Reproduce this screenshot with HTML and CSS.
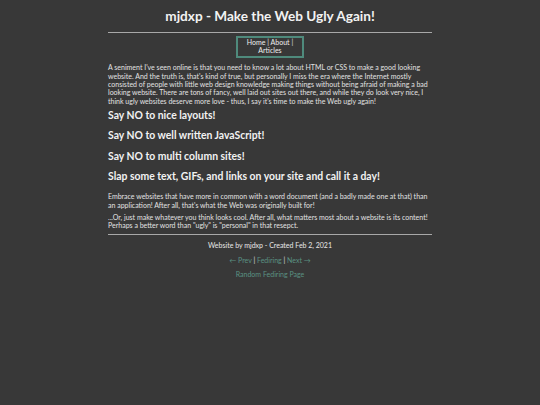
FILE: index.html
```html
<!DOCTYPE html>
<html>
<head>
<meta charset="utf-8">
<title>mjdxp - Make the Web Ugly Again!</title>
<link rel="stylesheet" href="styles.css">
</head>
<body>
<div class="page">
  <h1 class="title">mjdxp - Make the Web Ugly Again!</h1>
  <hr class="rule">
  <div class="nav-wrap">
    <div class="nav"><a href="#">Home</a> | <a href="#">About</a> | <a href="#">Articles</a></div>
  </div>
  <p class="text intro">A seniment I've seen online is that you need to know a lot about HTML or CSS to make a good looking website. And the truth is, that's kind of true, but personally I miss the era where the Internet mostly consisted of people with little web design knowledge making things without being afraid of making a bad looking website. There are tons of fancy, well laid out sites out there, and while they do look very nice, I think ugly websites deserve more love - thus, I say it's time to make the Web ugly again!</p>
  <div class="slogans">
    <h2 class="say">Say NO to nice layouts!</h2>
    <h2 class="say">Say NO to well written JavaScript!</h2>
    <h2 class="say">Say NO to multi column sites!</h2>
    <h2 class="say">Slap some text, GIFs, and links on your site and call it a day!</h2>
  </div>
  <p class="text after">Embrace websites that have more in common with a word document (and a badly made one at that) than an application! After all, that's what the Web was originally built for!</p>
  <p class="text">...Or, just make whatever you think looks cool. After all, what matters most about a website is its content! Perhaps a better word than "ugly" is "personal" in that resepct.</p>
  <hr class="rule bottom">
  <div class="footer">
    <p class="credit">Website by mjdxp - Created Feb 2, 2021</p>
    <p class="ring"><a class="link" href="#">&larr; Prev</a> | <a class="link" href="#">Fediring</a> | <a class="link" href="#">Next &rarr;</a></p>
    <p class="ring"><a class="link" href="#">Random Fediring Page</a></p>
  </div>
</div>
</body>
</html>
```
FILE: styles.css
```css
html, body {
  margin: 0;
  padding: 0;
  background: #383838;
}
body {
  color: #e2e2e2;
  font-family: Lato, "Noto Sans", sans-serif;
  font-size: 7px;
  line-height: 8.3px;
}
.page {
  width: 324px;
  margin: 0 auto;
  padding-top: 7px;
}
.title {
  margin: 0;
  text-align: center;
  font-size: 13.6px;
  line-height: 18px;
  font-weight: 700;
  color: #f2f2f2;
}
.rule {
  margin: 7px 0 0 0;
  border: 0;
  border-top: 1px solid #a8a8a8;
  height: 0;
}
.rule.bottom {
  margin-top: 4.5px;
}
.nav-wrap {
  display: flex;
  justify-content: center;
  margin-top: 3px;
}
.nav {
  width: 64px;
  border: 2px solid #4f8a7c;
  text-align: center;
  padding: 0 0 1px;
  font-size: 7px;
  line-height: 8.4px;
}
.nav a {
  color: #eeeeee;
  text-decoration: none;
}
.text {
  margin: 3.7px 0 0 0;
}
.text.intro {
  margin-top: 5.5px;
}
.text.after {
  margin-top: 9.2px;
}
.slogans {
  display: flex;
  flex-direction: column;
  gap: 7px;
  margin-top: 4.2px;
}
.say {
  margin: 0;
  font-size: 10.4px;
  line-height: 13.3px;
  font-weight: 700;
  color: #f2f2f2;
}
.footer {
  text-align: center;
  margin-top: 6.5px;
  font-size: 7px;
}
.credit {
  margin: 0;
  color: #e8e8e8;
}
.ring {
  margin: 6.2px 0 0 0;
  color: #e0e0e0;
}
.link {
  color: #5a9283;
  text-decoration: none;
}
```
